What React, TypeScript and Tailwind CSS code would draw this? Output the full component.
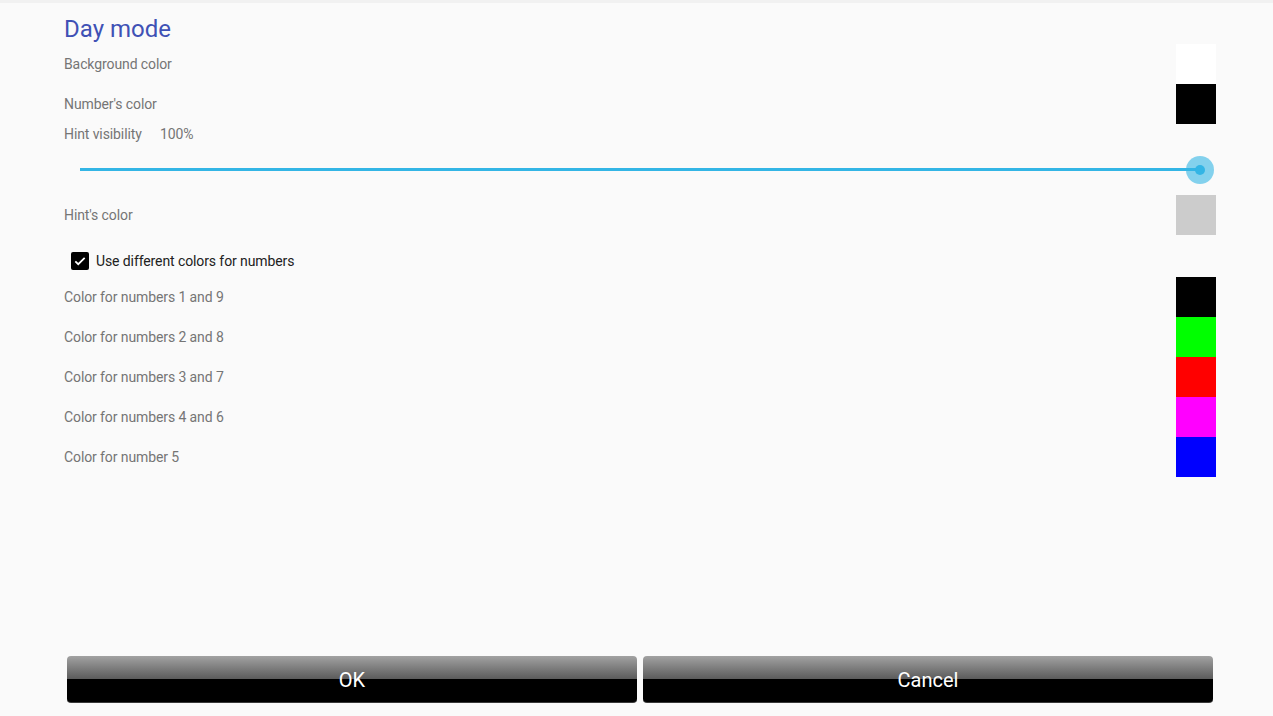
import React from "react";

const ColorRow = ({ label, color }: { label: string; color: string }) => (
  <div className="flex h-[40px] items-center justify-between">
    <span className="text-[14px] tracking-[-0.1px] text-[#757575]">{label}</span>
    <div className="h-[40px] w-[40px]" style={{ backgroundColor: color }} />
  </div>
);

const numberColors = [
  { label: "Color for numbers 1 and 9", color: "#000000" },
  { label: "Color for numbers 2 and 8", color: "#00ff00" },
  { label: "Color for numbers 3 and 7", color: "#ff0000" },
  { label: "Color for numbers 4 and 6", color: "#ff00ff" },
  { label: "Color for number 5", color: "#0000ff" },
];

const App: React.FC = () => {
  return (
    <div
      className="flex h-[716px] w-[1273px] flex-col overflow-hidden border-t-[3px] border-[#f1f1f1] bg-[#fafafa]"
      style={{ fontFamily: "Roboto, 'Noto Sans', sans-serif" }}
    >
      <div className="pl-[64px] pr-[57px]">
        {/* Title */}
        <div className="h-[41px] pt-[11px]">
          <h1 className="text-[24px] leading-[30px] text-[#3f51b5]">Day mode</h1>
        </div>

        <ColorRow label="Background color" color="#ffffff" />
        <ColorRow label="Number's color" color="#000000" />

        {/* Hint visibility */}
        <div className="flex h-[20px] items-center text-[14px] tracking-[-0.1px] text-[#757575]">
          <span className="w-[96px]">Hint visibility</span>
          <span>100%</span>
        </div>

        {/* Slider */}
        <div className="flex h-[51px] items-center px-4">
          <div className="relative h-[3px] w-full bg-[#33b5e5]">
            <div className="absolute right-[-14px] top-1/2 flex h-[28px] w-[28px] -translate-y-1/2 items-center justify-center rounded-full bg-[#33b5e5]/60">
              <div className="h-[10px] w-[10px] rounded-full bg-[#33b5e5]" />
            </div>
          </div>
        </div>

        <ColorRow label="Hint's color" color="#cccccc" />

        {/* Checkbox */}
        <div className="flex h-[42px] items-center pt-[10px]">
          <div className="ml-[7px] flex h-[18px] w-[18px] items-center justify-center rounded-[2px] bg-black">
            <svg width="14" height="14" viewBox="0 0 24 24" fill="none">
              <path d="M4 12.5l5 5L20 6.5" stroke="white" strokeWidth="3" />
            </svg>
          </div>
          <span className="ml-[7px] text-[14px] tracking-[-0.1px] text-[#212121]">
            Use different colors for numbers
          </span>
        </div>

        {numberColors.map((c) => (
          <ColorRow key={c.label} label={c.label} color={c.color} />
        ))}
      </div>

      <div className="flex-1" />

      {/* Buttons */}
      <div className="flex gap-[6px] pb-[13px] pl-[67px] pr-[60px]">
        {["OK", "Cancel"].map((t) => (
          <button
            key={t}
            className="flex h-[47px] flex-1 items-center justify-center rounded-[4px] border-b border-[#3a3a3a] bg-[linear-gradient(to_bottom,#a2a2a2_0%,#5a5a5a_51%,#000000_51%,#000000_100%)] pt-[2px] text-[20px] text-white"
          >
            {t}
          </button>
        ))}
      </div>
    </div>
  );
};

export default App;
